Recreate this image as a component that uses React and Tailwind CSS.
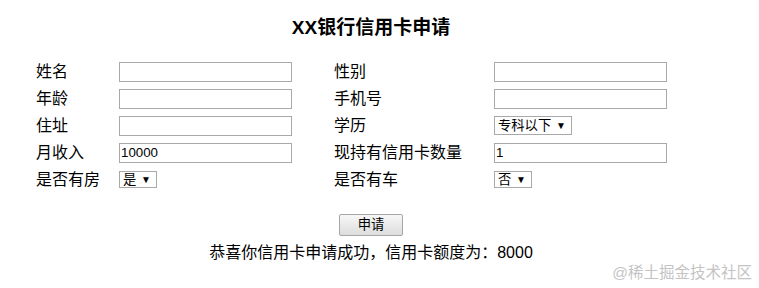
import React from 'react';

const font = { fontFamily: '"Liberation Sans", "Noto Sans CJK SC", sans-serif' };

function TextInput({ value = '' }) {
  return (
    <input
      type="text"
      defaultValue={value}
      className="block w-[173px] h-[20px] border border-[#a9a9a9] bg-white px-[1px] text-[13.3px] text-black outline-none"
    />
  );
}

function Select({ width, options }) {
  return (
    <div className={`relative ${width}`}>
      <select className="block appearance-none w-full h-full border border-[#a9a9a9] bg-white pl-[3px] text-[13.3px] leading-none text-black outline-none rounded-none">
        {options.map(o => (
          <option key={o}>{o}</option>
        ))}
      </select>
      <span className="pointer-events-none absolute right-[6px] top-1/2 -translate-y-1/2 text-[10px] leading-none text-black">▼</span>
    </div>
  );
}

const rows = [
  ['姓名', <TextInput />, '性别', <TextInput />],
  ['年龄', <TextInput />, '手机号', <TextInput />],
  ['住址', <TextInput />, '学历', <Select width="w-[78px] h-[19px]" options={['专科以下', '专科', '本科', '硕士及以上']} />],
  ['月收入', <TextInput value="10000" />, '现持有信用卡数量', <TextInput value="1" />],
  ['是否有房', <Select width="w-[38px] h-[17px]" options={['是', '否']} />, '是否有车', <Select width="w-[38px] h-[17px]" options={['否', '是']} />],
];

export default function App() {
  return (
    <div className="relative w-[759px] h-[288px] bg-white text-black overflow-hidden" style={font}>
      <div className="w-[742px] pt-[16px] flex flex-col items-center">
        <h3 className="text-[19px] leading-[24px] font-bold">XX银行信用卡申请</h3>

        <div className="self-start mt-[18px] pl-[36px] grid grid-cols-[83px_215px_160px_173px] text-[16px]">
          {rows.map((r, i) => (
            <React.Fragment key={i}>
              <div className="h-[27px] flex items-center">{r[0]}</div>
              <div className="h-[27px] flex items-center">{r[1]}</div>
              <div className="h-[27px] flex items-center">{r[2]}</div>
              <div className="h-[27px] flex items-center">{r[3]}</div>
            </React.Fragment>
          ))}
        </div>

        <button className="mt-[21px] w-[64px] h-[22px] border border-[#a6a6a6] rounded-[2px] bg-gradient-to-b from-[#f7f7f7] to-[#dddddd] text-[13.3px] leading-none text-black">
          申请
        </button>

        <p className="mt-[7px] text-[16px] leading-[20px]">恭喜你信用卡申请成功，信用卡额度为：8000</p>
      </div>

      <div className="absolute right-[7px] top-[263px] text-[15.5px] leading-[20px] text-[#c4c4c4]">@稀土掘金技术社区</div>
    </div>
  );
}
